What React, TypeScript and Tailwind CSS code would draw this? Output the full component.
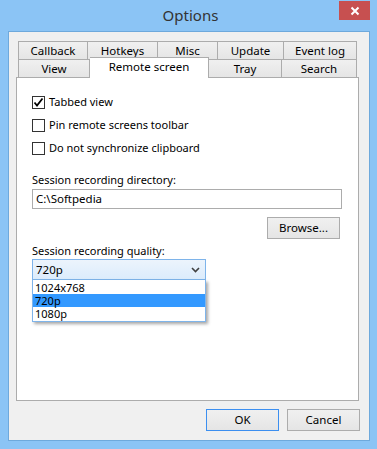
import React from "react";

const font = { fontFamily: '"Segoe UI", "Noto Sans", Lato, sans-serif' };

const Tab = ({ label, w, first }: { label: string; w: string; first?: boolean }) => (
  <div
    className={`${w} flex h-[18px] items-center justify-center border-t border-r border-[#acacac] bg-gradient-to-b from-[#f0f0f0] to-[#e5e5e5] text-[11.5px] leading-none text-black ${
      first ? "border-l" : ""
    }`}
  >
    {label}
  </div>
);

const Check = ({ label, checked }: { label: string; checked?: boolean }) => (
  <label className="flex h-[15px] items-center gap-[4px] text-[11px] text-black">
    <span className="flex h-[13px] w-[13px] items-center justify-center border border-[#333333] bg-white">
      {checked ? (
        <svg width="11" height="11" viewBox="0 0 11 11">
          <path d="M1.5 5.5 L4 8.5 L9.5 1.5" fill="none" stroke="#000" strokeWidth="1.8" />
        </svg>
      ) : null}
    </span>
    {label}
  </label>
);

const Button = ({ label, primary }: { label: string; primary?: boolean }) => (
  <div
    className={`flex h-[22px] w-[73px] items-center justify-center border bg-gradient-to-b from-[#f0f0f0] to-[#e5e5e5] text-[11.5px] text-black ${
      primary ? "border-[#3c8ff0]" : "border-[#acacac]"
    }`}
  >
    {label}
  </div>
);

export default function App() {
  return (
    <div className="flex h-[449px] w-[377px] flex-col bg-[#8bc4f5]" style={font}>
      <div className="relative flex h-[31px] items-center justify-center">
        <span className="pl-[4px] text-[15px] text-[#333333]">Options</span>
        <div className="absolute top-[1px] right-[7px] flex h-[19px] w-[31px] items-center justify-center bg-[#c75050]">
          <svg width="10" height="10" viewBox="0 0 10 10">
            <path d="M1.5 1.5 L8.5 8.5 M8.5 1.5 L1.5 8.5" stroke="#fff" strokeWidth="2" />
          </svg>
        </div>
      </div>

      <div className="ml-[8px] flex h-[410px] w-[362px] flex-col border border-[#6ea9dc] bg-[#f0f0f0]">
        <div className="mt-[9px] ml-[9px] flex flex-col">
          <div className="flex">
            <Tab label="Callback" w="w-[70px]" first />
            <Tab label="Hotkeys" w="w-[70px]" />
            <Tab label="Misc" w="w-[60px]" />
            <Tab label="Update" w="w-[66px]" />
            <Tab label="Event log" w="w-[73px]" />
          </div>
          <div className="flex items-end">
            <Tab label="View" w="w-[72px]" first />
            <div className="relative z-10 -mt-[2px] -mb-px flex h-[21px] w-[119px] items-start justify-center border-t border-r border-[#acacac] bg-white pt-[2px] text-[11.5px] leading-[14px] text-black">
              Remote screen
            </div>
            <Tab label="Tray" w="w-[73px]" />
            <Tab label="Search" w="w-[75px]" />
          </div>
        </div>

        <div className="relative ml-[7px] flex h-[324px] w-[343px] flex-col border border-[#acacac] bg-white pt-[17px] pl-[15px] pr-[17px]">
          <div className="flex flex-col gap-[8px]">
            <Check label="Tabbed view" checked />
            <Check label="Pin remote screens toolbar" />
            <Check label="Do not synchronize clipboard" />
          </div>

          <div className="mt-[16px] h-[15px] text-[11px] leading-[15px] text-black">Session recording directory:</div>
          <div className="mt-[2px] flex h-[20px] w-[310px] items-center border border-[#acacac] bg-white pl-[3px] text-[11.5px] text-black">
            C:\Softpedia
          </div>
          <div className="mt-[8px] flex justify-end pr-[1px]">
            <Button label="Browse..." />
          </div>

          <div className="mt-[4px] h-[15px] text-[11px] leading-[15px] text-black">Session recording quality:</div>
          <div className="relative mt-[1px] w-[174px]">
            <div className="flex h-[21px] items-center justify-between border border-[#7eb4ea] bg-gradient-to-b from-[#ecf4fc] to-[#dcecfc] pr-[5px] pl-[3px] text-[11.5px] text-black">
              <span>720p</span>
              <svg width="9" height="6" viewBox="0 0 9 6">
                <path d="M1 1 L4.5 4.5 L8 1" fill="none" stroke="#404040" strokeWidth="1.6" />
              </svg>
            </div>
            <div className="absolute top-[21px] left-0 z-20 flex w-[174px] flex-col border border-t-0 border-[#7eb4ea] bg-white py-px text-[11px] text-black shadow-[2px_2px_3px_rgba(0,0,0,0.35)]">
              <div className="h-[13px] pl-[2px] leading-[13px]">1024x768</div>
              <div className="h-[13px] bg-[#3399ff] pl-[2px] leading-[13px]">720p</div>
              <div className="h-[13px] pl-[2px] leading-[13px]">1080p</div>
            </div>
          </div>
        </div>

        <div className="mt-[8px] flex justify-end gap-[8px] pr-[9px]">
          <Button label="OK" primary />
          <Button label="Cancel" />
        </div>
      </div>
    </div>
  );
}
